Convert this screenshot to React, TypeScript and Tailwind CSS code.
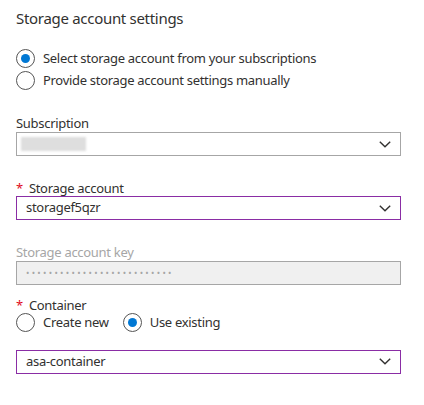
const font = { fontFamily: '"Segoe UI", "Noto Sans", sans-serif' };

function Chevron() {
  return (
    <svg width="12" height="7" viewBox="0 0 12 7" fill="none" className="shrink-0">
      <path d="M0.8 0.8 L6 5.8 L11.2 0.8" stroke="#323130" strokeWidth="1.4" />
    </svg>
  );
}

function Radio({ checked, label }: { checked?: boolean; label: string }) {
  return (
    <label className="flex items-center gap-2 text-[13px] tracking-[-0.3px] text-[#323130]">
      <span className="flex h-[19px] w-[19px] shrink-0 items-center justify-center rounded-full border border-[#555]">
        {checked && <span className="h-[9px] w-[9px] rounded-full bg-[#0078d4]" />}
      </span>
      <span>{label}</span>
    </label>
  );
}

function Label({ text, required, muted }: { text: string; required?: boolean; muted?: boolean }) {
  return (
    <div className={`h-4 text-[13px] leading-4 tracking-[-0.3px] ${muted ? "text-[#a6a6a6]" : "text-[#323130]"}`}>
      {required && <span className="mr-1.5 text-[#e00b1c]">*</span>}
      {text}
    </div>
  );
}

function Select({ value, focused, children }: { value?: string; focused?: boolean; children?: React.ReactNode }) {
  return (
    <div
      className={`flex h-6 w-[385px] items-center justify-between border pl-[9px] pr-[9px] text-[13px] tracking-[-0.3px] text-[#323130] ${
        focused ? "border-[#8a2da5]" : "border-[#a6a6a6]"
      }`}
    >
      {children ?? <span>{value}</span>}
      <Chevron />
    </div>
  );
}

export default function App() {
  return (
    <div className="h-[405px] w-[424px] bg-white px-4 pt-2" style={font}>
      <h2 className="h-5 text-[15px] leading-5 tracking-[-0.3px] text-[#323130]">Storage account settings</h2>

      <div className="mt-[21px] flex flex-col gap-[2px]">
        <Radio checked label="Select storage account from your subscriptions" />
        <Radio label="Provide storage account settings manually" />
      </div>

      <div className="mt-[25px]">
        <Label text="Subscription" />
        <div className="mt-px">
          <Select>
            <span className="-ml-[5px] h-[14px] w-[65px] bg-[#dedede] blur-[1px]" />
          </Select>
        </div>
      </div>

      <div className="mt-6">
        <Label text="Storage account" required />
        <Select value="storagef5qzr" focused />
      </div>

      <div className="mt-6">
        <Label text="Storage account key" muted />
        <div className="mt-px flex h-6 w-[385px] items-center border border-[#a6a6a6] bg-[#f0f0f0] pl-[9px] text-[9px] tracking-[2.3px] text-[#a6a6a6]">
          ••••••••••••••••••••••••••
        </div>
      </div>

      <div className="mt-3">
        <Label text="Container" required />
        <div className="flex items-center gap-[14px]">
          <Radio label="Create new" />
          <Radio checked label="Use existing" />
        </div>
        <div className="mt-[17px]">
          <Select value="asa-container" focused />
        </div>
      </div>
    </div>
  );
}
